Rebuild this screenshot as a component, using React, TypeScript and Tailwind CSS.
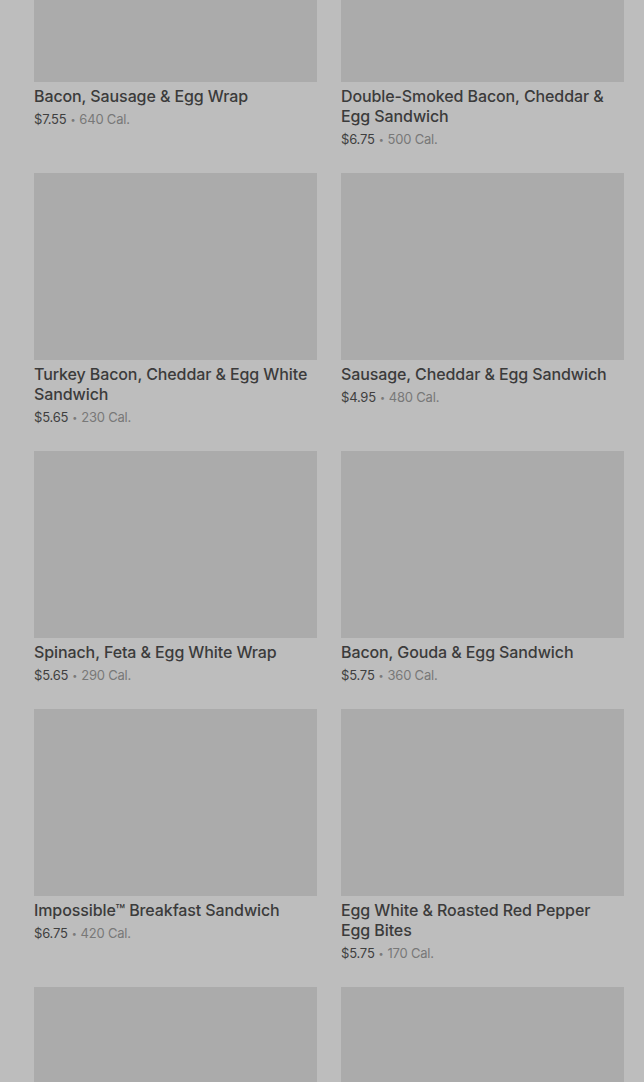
import React from 'react';

interface MenuItem {
  name?: string;
  price?: string;
  cal?: string;
}

const items: MenuItem[] = [
  { name: 'Bacon, Sausage & Egg Wrap', price: '$7.55', cal: '640 Cal.' },
  { name: 'Double-Smoked Bacon, Cheddar & Egg Sandwich', price: '$6.75', cal: '500 Cal.' },
  { name: 'Turkey Bacon, Cheddar & Egg White Sandwich', price: '$5.65', cal: '230 Cal.' },
  { name: 'Sausage, Cheddar & Egg Sandwich', price: '$4.95', cal: '480 Cal.' },
  { name: 'Spinach, Feta & Egg White Wrap', price: '$5.65', cal: '290 Cal.' },
  { name: 'Bacon, Gouda & Egg Sandwich', price: '$5.75', cal: '360 Cal.' },
  { name: 'Impossible™ Breakfast Sandwich', price: '$6.75', cal: '420 Cal.' },
  { name: 'Egg White & Roasted Red Pepper Egg Bites', price: '$5.75', cal: '170 Cal.' },
  {}, // below the fold, only the image shows
  {},
];

const MenuCard: React.FC<{ item: MenuItem }> = ({ item }) => (
  <div className="flex flex-col">
    <div className="h-[187px] w-full bg-[#ababab]"></div>
    {item.name && (
      <>
        <div className="mt-1 pr-[6px] text-[16px] leading-5 font-medium text-[#3b3b3b] tracking-[-0.1px]">{item.name}</div>
        <div className="mt-[3px] flex h-5 items-center text-[13px] leading-5 text-[#3f3f3f] tracking-[-0.2px]">
          <span>{item.price}</span>
          <span className="mx-[4px] text-[9px] leading-none text-[#7a7a7a]">•</span>
          <span className="text-[#787878]">{item.cal}</span>
        </div>
      </>
    )}
  </div>
);

export default function App() {
  return (
    <div className="h-[1082px] w-[644px] overflow-hidden bg-[#bdbdbd]" style={{ fontFamily: 'Inter, "Noto Sans", sans-serif' }}>
      <div className="mt-[-105px] grid grid-cols-2 gap-6 pl-[34px] pr-[20px]">
        {items.map((item, i) => (
          <MenuCard key={i} item={item} />
        ))}
      </div>
    </div>
  );
}
